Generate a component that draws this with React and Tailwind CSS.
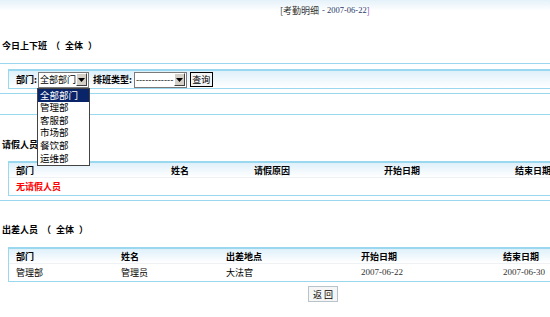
const leaveCols = 'grid grid-cols-[155px_83px_130px_131px_60px] whitespace-nowrap';
const tripCols = 'grid grid-cols-[105px_105px_135px_142px_60px] whitespace-nowrap';
const depts = ['全部部门', '管理部', '客服部', '市场部', '餐饮部', '运维部'];

function FakeSelect({ width, children }) {
  return (
    <div className={`flex h-[16px] ${width} items-center border border-[#7a7a7a] bg-white`}>
      <div className="flex-1 whitespace-nowrap pl-[1px]">{children}</div>
      <div className="mr-[1px] flex h-[13px] w-[11px] shrink-0 items-center justify-center border border-t-white border-l-white border-r-[#404040] border-b-[#404040] bg-[#d4d0c8]">
        <svg width="7" height="4" viewBox="0 0 7 4"><path d="M0 0h7L3.5 4z" fill="#000" /></svg>
      </div>
    </div>
  );
}

function Heading({ children }) {
  return (
    <div className="flex h-[12px] items-center pl-[2px] font-bold whitespace-nowrap">
      <span>{children}</span>
      <span className="ml-[4px]">（</span>
      <span className="ml-[5px]">全体</span>
      <span className="ml-[5px]">）</span>
    </div>
  );
}

export default function App() {
  return (
    <div className="relative h-[317px] w-[550px] overflow-hidden bg-white text-[9px] leading-none text-black font-['Noto_Sans_CJK_SC',sans-serif]">
      {/* top band + title */}
      <div className="h-[22px] bg-linear-to-b from-[#e4f1f9] via-white to-white pt-[4px]">
        <div className="flex h-[12px] items-center pl-[280px] text-[#333]">
          <span>[考勤明细</span>
          <span className="ml-[3px] font-['Liberation_Serif',serif] text-[8.5px] text-[#2a3a6a]">- 2007-06-22</span>
          <span className="text-[#9a55b5]">]</span>
        </div>
      </div>

      <div className="mt-[17px]"><Heading>今日上下班</Heading></div>

      {/* search bar */}
      <div className="mt-[12px] h-[31px] border-y border-[#9ad8f0] pt-[5px]">
        <div className="ml-[8px] flex h-[20px] items-center gap-[1px] border-l border-t-2 border-b border-[#9ad8f0] bg-linear-to-b from-[#dff0fa] to-white pl-[7px]">
          <span className="font-bold">部门:</span>
          <FakeSelect width="w-[51px]">全部部门</FakeSelect>
          <span className="ml-[3px] font-bold">排班类型:</span>
          <div className="ml-[1px]">
            <FakeSelect width="w-[53px]">------------</FakeSelect>
          </div>
          <button className="ml-[2px] flex h-[15px] w-[23px] items-center justify-center border border-black bg-[#f4f4f4] text-[9px]">查询</button>
        </div>
      </div>

      <div className="mt-[20px] border-t border-[#9ad8f0]" />

      <div className="mt-[23px]"><Heading>请假人员</Heading></div>

      {/* leave table */}
      <div className="ml-[8px] mt-[11px] w-[600px] border-l border-t-2 border-b border-[#9ad8f0]">
        <div className={`${leaveCols} h-[15px] items-center font-bold bg-linear-to-b from-[#dff0fa] to-white pl-[7px] border-b border-[#eef2f4]`}>
          <span>部门</span><span>姓名</span><span>请假原因</span><span>开始日期</span><span>结束日期</span>
        </div>
        <div className="flex h-[17px] items-center pl-[7px] font-bold text-[#ff0000]">无请假人员</div>
      </div>

      <div className="mt-[4px] border-t border-[#9ad8f0]" />

      <div className="mt-[22px]"><Heading>出差人员</Heading></div>

      {/* business trip table */}
      <div className="ml-[8px] mt-[12px] w-[600px] border-l border-t-2 border-b border-[#9ad8f0]">
        <div className={`${tripCols} h-[15px] items-center font-bold bg-linear-to-b from-[#dff0fa] to-white pl-[7px] border-b border-[#eef2f4]`}>
          <span>部门</span><span>姓名</span><span>出差地点</span><span>开始日期</span><span>结束日期</span>
        </div>
        <div className={`${tripCols} h-[17px] items-center pl-[7px]`}>
          <span>管理部</span><span>管理员</span><span>大法官</span>
          <span className="font-['Liberation_Serif',serif] text-[#333]">2007-06-22</span>
          <span className="font-['Liberation_Serif',serif] text-[#333]">2007-06-30</span>
        </div>
      </div>

      <button className="ml-[308px] mt-[4px] flex h-[16px] w-[30px] items-center justify-center border border-[#b8c4cc] bg-[#f6f6f6] text-[9px]">返 回</button>

      {/* open department dropdown */}
      <div className="absolute left-[37px] top-[88px] flex w-[53px] flex-col border border-[#444] bg-white">
        {depts.map((d, i) => (
          <div key={d} className={`flex h-[12.6px] items-center pl-[2px] text-[9.5px] ${i === 0 ? 'bg-[#0a246a] text-white' : ''}`}>{d}</div>
        ))}
      </div>
    </div>
  );
}
